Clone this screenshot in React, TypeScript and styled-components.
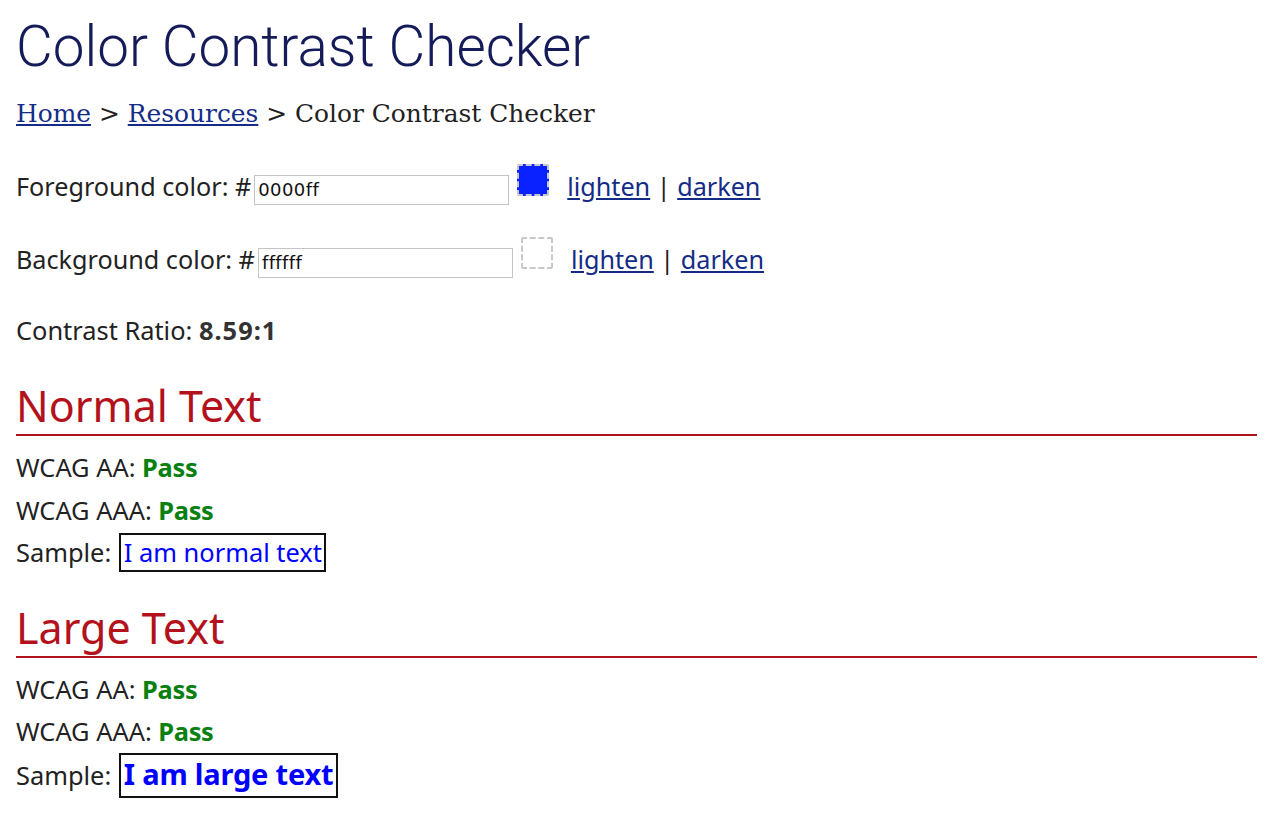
import styled, { createGlobalStyle } from 'styled-components';

const GlobalStyle = createGlobalStyle`
    body {
        margin: 0;
        background: #fff;
        font-family: 'Noto Sans', 'Open Sans', sans-serif;
        color: #222;
    }
`

const Page = styled.div`
    padding: 0 23px 20px 16px;
`

const Title = styled.h1`
    font-family: 'Roboto', sans-serif;
    font-weight: 300;
    font-size: 56.6px;
    line-height: 67px;
    color: #141b58;
    margin: 13px 0 0;
`

const Breadcrumb = styled.nav`
    font-family: 'DejaVu Serif', serif;
    font-size: 24.9px;
    line-height: 34px;
    color: #222;
    margin-top: 17px;
`

const Crumb = styled.a`
    color: #142c86;
    text-decoration: underline;
`

const ColorRow = styled.div<{ first?: boolean }>`
    display: flex;
    align-items: baseline;
    font-size: 25.2px;
    line-height: 40px;
    margin-top: ${(p) => (p.first ? '33px' : '31px')};
`

const HexInput = styled.input`
    width: 255px;
    height: 30px;
    box-sizing: border-box;
    margin: 0 0 0 3px;
    border: 1px solid #c4c4c4;
    padding: 0 3px;
    font-family: 'DejaVu Sans', sans-serif;
    font-size: 18px;
    letter-spacing: 0.4px;
    color: #111;
    &:focus {
        outline: none;
    }
`

const Swatch = styled.div<{ fill: string }>`
    width: 32px;
    height: 32px;
    box-sizing: border-box;
    margin-left: 8px;
    border: 2px dashed #c8c8c8;
    border-radius: 2px;
    background-color: ${(p) => p.fill};
`

const ShadeLinks = styled.span`
    margin-left: 18px;
    color: #222;
`

const ShadeLink = styled.a`
    color: #142c86;
    text-decoration: underline;
`

const Ratio = styled.p`
    font-size: 25.4px;
    line-height: 40px;
    margin: 31px 0 0;
    b {
        color: #333;
        letter-spacing: 1px;
    }
`

const SectionTitle = styled.h2`
    font-weight: 400;
    font-size: 43px;
    line-height: 52px;
    color: #b3121c;
    margin: 0;
    padding-bottom: 2px;
    border-bottom: 2px solid #b3121c;
`

const Section = styled.section<{ first?: boolean }>`
    margin-top: ${(p) => (p.first ? '30px' : '28px')};
`

const Results = styled.div`
    margin-top: 10px;
`

const Result = styled.p`
    font-size: 25.4px;
    line-height: 42.5px;
    margin: 0;
`

const Pass = styled.strong`
    color: #0a8010;
    letter-spacing: -0.3px;
`

const SampleBox = styled.span<{ large?: boolean }>`
    display: inline-block;
    margin-left: 1px;
    border: 2px solid #111;
    color: #0000ff;
    font-weight: ${(p) => (p.large ? 700 : 400)};
    font-size: ${(p) => (p.large ? '29px' : '25.4px')};
    letter-spacing: ${(p) => (p.large ? '-0.2px' : '0')};
    line-height: ${(p) => (p.large ? '37px' : '35px')};
    padding: ${(p) => (p.large ? '0 3px 4px 3px' : '0 2px 0 3px')};
`

const ResultSection = ({ title, large }: { title: string; large?: boolean }) => (
    <Section first={!large}>
        <SectionTitle>{title}</SectionTitle>
        <Results>
            <Result>WCAG AA: <Pass>Pass</Pass></Result>
            <Result>WCAG AAA: <Pass>Pass</Pass></Result>
            <Result>
                Sample: <SampleBox large={large}>{large ? 'I am large text' : 'I am normal text'}</SampleBox>
            </Result>
        </Results>
    </Section>
)

const App = () => {
    return (
        <Page>
            <GlobalStyle />
            <Title>Color Contrast Checker</Title>
            <Breadcrumb>
                <Crumb href='#'>Home</Crumb> &gt; <Crumb href='#'>Resources</Crumb> &gt; Color Contrast Checker
            </Breadcrumb>
            <ColorRow first>
                Foreground color: #
                <HexInput defaultValue='0000ff' />
                <Swatch fill='#0a22ff' />
                <ShadeLinks>
                    <ShadeLink href='#'>lighten</ShadeLink> | <ShadeLink href='#'>darken</ShadeLink>
                </ShadeLinks>
            </ColorRow>
            <ColorRow>
                Background color: #
                <HexInput defaultValue='ffffff' />
                <Swatch fill='#ffffff' />
                <ShadeLinks>
                    <ShadeLink href='#'>lighten</ShadeLink> | <ShadeLink href='#'>darken</ShadeLink>
                </ShadeLinks>
            </ColorRow>
            <Ratio>
                Contrast Ratio: <b>8.59:1</b>
            </Ratio>
            <ResultSection title='Normal Text' />
            <ResultSection title='Large Text' large />
        </Page>
    )
}

export default App;
